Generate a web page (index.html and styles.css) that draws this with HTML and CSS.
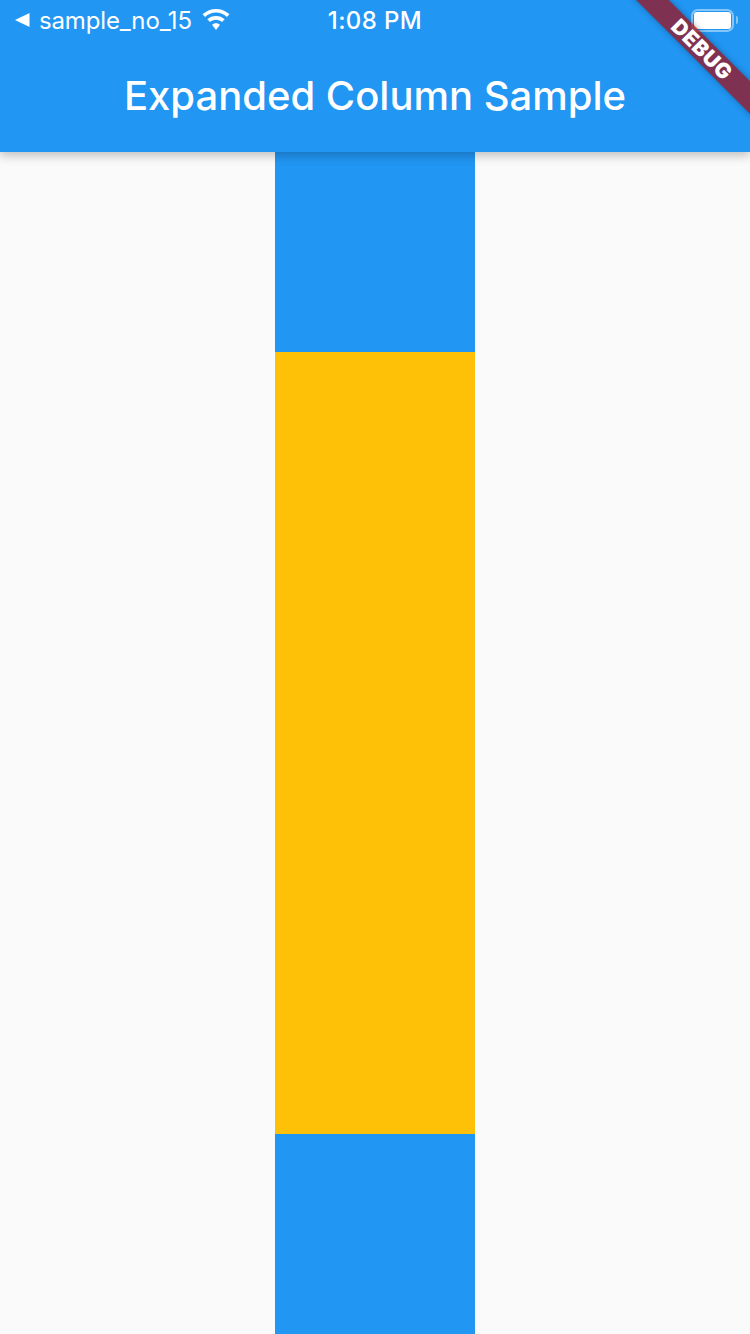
FILE: index.html
```html
<!DOCTYPE html>
<html lang="en">
<head>
    <meta charset="UTF-8">
    <meta name="viewport" content="width=device-width, initial-scale=1.0">
    <title>Expanded Column Sample</title>
    <link rel="stylesheet" href="styles.css">
</head>
<body>
    <div class="screen">
        <header class="app-bar">
            <div class="status-bar">
                <div class="status-left">
                    <svg class="back-arrow" width="16" height="16" viewBox="0 0 16 16"><path d="M15.500 1v14L1 8z" fill="#fff"/></svg>
                    <span class="carrier">sample_no_15</span>
                    <svg class="wifi" width="30" height="22" viewBox="0 0 30 22">
                        <path d="M15 3.600c4.200 0 8 1.600 10.900 4.300l2.600-2.700C24.300 1.900 19.900 0 15 0S5.700 1.900 1.500 5.200l2.600 2.700C7 5.200 10.800 3.600 15 3.600z" fill="#fff"/>
                        <path d="M15 10.800c2.300 0 4.400.9 6 2.300l2.700-2.800C21.400 8.200 18.300 7 15 7s-6.400 1.200-8.700 3.300l2.700 2.800c1.600-1.400 3.700-2.300 6-2.300z" fill="#fff"/>
                        <path d="M15 14.200c-1.600 0-3 .6-4 1.500l4 5.300 4-5.300c-1-.9-2.400-1.500-4-1.500z" fill="#fff"/>
                    </svg>
                </div>
                <span class="status-time">1:08 PM</span>
                <div class="status-right">
                    <div class="battery"><div class="battery-level"></div></div>
                    <div class="battery-cap"></div>
                </div>
            </div>
            <h1 class="app-title">Expanded Column Sample</h1>
        </header>
        <main class="column">
            <div class="box box-blue"></div>
            <div class="box box-amber"></div>
            <div class="box box-blue"></div>
        </main>
        <div class="debug-banner">DEBUG</div>
    </div>
</body>
</html>
```

FILE: styles.css
```css
html, body {
    margin: 0;
    padding: 0;
}
body {
    font-family: Inter, 'Noto Sans', sans-serif;
    background-color: #fafafa;
}
.screen {
    position: relative;
    display: flex;
    flex-direction: column;
    width: 750px;
    height: 1334px;
    overflow: hidden;
}
.app-bar {
    position: relative;
    z-index: 1;
    height: 152px;
    background-color: #2196f3;
    color: #fff;
    box-shadow: 0 3px 10px rgba(0,0,0,0.26);
}
.status-bar {
    display: grid;
    grid-template-columns: 1fr auto 1fr;
    align-items: center;
    height: 40px;
    padding: 0 12px;
    font-size: 24px;
}
.status-left {
    display: flex;
    align-items: center;
}
.back-arrow {
    margin-left: 2px;
    margin-right: 9px;
}
.carrier {
    letter-spacing: -0.15px;
}
.wifi {
    margin-left: 9px;
}
.status-time {
    font-weight: 500;
    letter-spacing: 0.4px;
}
.status-right {
    display: flex;
    align-items: center;
    justify-content: flex-end;
}
.battery {
    box-sizing: border-box;
    width: 43px;
    height: 23px;
    padding: 1px;
    border: 2px solid rgba(255,255,255,0.45);
    border-radius: 7px;
}
.battery-level {
    height: 100%;
    background-color: #fff;
    border-radius: 3px;
}
.battery-cap {
    width: 2px;
    height: 8px;
    margin-left: 2px;
    background-color: rgba(255,255,255,0.45);
    border-radius: 0 2px 2px 0;
}
.app-title {
    margin: 0;
    height: 112px;
    line-height: 112px;
    text-align: center;
    font-size: 40px;
    font-weight: 500;
}
.column {
    flex: 1;
    display: flex;
    flex-direction: column;
    align-items: center;
}
.box {
    width: 200px;
    height: 200px;
}
.box-blue {
    background-color: #2196f3;
}
.box-amber {
    flex: 1;
    background-color: #ffc107;
}
.debug-banner {
    position: absolute;
    z-index: 2;
    top: 37.500px;
    left: 602px;
    width: 200px;
    height: 23px;
    line-height: 23px;
    text-align: center;
    transform: rotate(45deg);
    background-color: rgba(173,0,0,0.67);
    box-shadow: 0 0 6px rgba(0,0,0,0.3);
    color: #fff;
    font-size: 21px;
    font-weight: 900;
    letter-spacing: 0.6px;
}
```
